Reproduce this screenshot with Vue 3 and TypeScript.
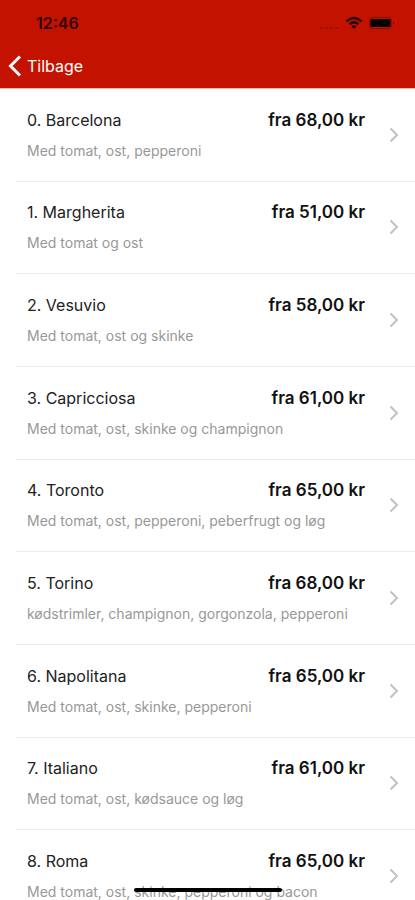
<script setup lang="ts">
interface Pizza {
  id: number
  name: string
  toppings: string
  price: string
}

const pizzas: Pizza[] = [
  { id: 0, name: 'Barcelona', toppings: 'Med tomat, ost, pepperoni', price: '68,00' },
  { id: 1, name: 'Margherita', toppings: 'Med tomat og ost', price: '51,00' },
  { id: 2, name: 'Vesuvio', toppings: 'Med tomat, ost og skinke', price: '58,00' },
  { id: 3, name: 'Capricciosa', toppings: 'Med tomat, ost, skinke og champignon', price: '61,00' },
  { id: 4, name: 'Toronto', toppings: 'Med tomat, ost, pepperoni, peberfrugt og løg', price: '65,00' },
  { id: 5, name: 'Torino', toppings: 'kødstrimler, champignon, gorgonzola, pepperoni', price: '68,00' },
  { id: 6, name: 'Napolitana', toppings: 'Med tomat, ost, skinke, pepperoni', price: '65,00' },
  { id: 7, name: 'Italiano', toppings: 'Med tomat, ost, kødsauce og løg', price: '61,00' },
  { id: 8, name: 'Roma', toppings: 'Med tomat, ost, skinke, pepperoni og bacon', price: '65,00' },
]
</script>

<template>
  <div class="screen">
    <header class="top">
      <div class="status">
        <span class="time">12:46</span>
        <span class="signals">
          <svg class="cell" width="20" height="4" viewBox="0 0 20 4" aria-hidden="true">
            <path d="M1 1h3v2H1zM6 1h3v2H6zM11 1h3v2h-3zM16 1h3v2h-3z" />
          </svg>
          <svg class="wifi" width="18" height="14" viewBox="0 0 18 14" aria-hidden="true">
            <path d="M1.500 5.300Q9-1.300 16.500 5.300M4.500 8.200Q9 4.400 13.500 8.200" />
            <path class="dot" d="M6.300 10.300Q9 8.200 11.700 10.300L9 13z" />
          </svg>
          <svg class="battery" width="26" height="12" viewBox="0 0 26 12" aria-hidden="true">
            <rect class="shell" x="0.5" y="0.5" width="22" height="11" rx="2.5" />
            <rect x="1.500" y="2" width="20" height="8" rx="1" />
            <path class="cap" d="M24 4q2 2 0 4z" />
          </svg>
        </span>
      </div>
      <nav class="nav">
        <button class="back" type="button">
          <svg width="14" height="22" viewBox="0 0 14 22" aria-hidden="true">
            <path d="M12 1.500L2.500 11l9.500 9.500" />
          </svg>
          <span>Tilbage</span>
        </button>
      </nav>
    </header>

    <ul class="list">
      <li v-for="pizza in pizzas" :key="pizza.id" class="item">
        <a class="row" href="#">
          <span class="details">
            <span class="headline">
              <span class="name">{{ pizza.id }}. {{ pizza.name }}</span>
              <span class="price">fra {{ pizza.price }} kr</span>
            </span>
            <span class="toppings">{{ pizza.toppings }}</span>
          </span>
          <svg class="chevron" width="10" height="16" viewBox="0 0 10 16" aria-hidden="true">
            <path d="M1.500 1.500L8 8l-6.500 6.500" />
          </svg>
        </a>
      </li>
    </ul>

    <div class="home-indicator"></div>
  </div>
</template>

<style>
body {
  margin: 0;
  background: #fff;
}
</style>

<style scoped>
.screen {
  position: relative;
  display: flex;
  flex-direction: column;
  height: 100vh;
  overflow: hidden;
  background: #fff;
  color: #222;
  font-family: Inter, "Liberation Sans", sans-serif;
}

.top {
  flex: none;
  background: #c41200;
  border-bottom: 1px solid #f3b5b0;
}

.status {
  display: flex;
  align-items: center;
  justify-content: space-between;
  height: 44px;
  padding: 2px 20px 0 36px;
  box-sizing: border-box;
}

.time {
  color: #300400;
  font-size: 16px;
  font-weight: 600;
}

.signals {
  display: flex;
  align-items: center;
  gap: 6px;
}

.cell {
  align-self: flex-end;
  fill: #a30f00;
}

.wifi {
  fill: none;
  stroke: #240300;
  stroke-width: 2.4;
}

.wifi .dot {
  fill: #240300;
  stroke: none;
}

.battery {
  fill: #000;
}

.battery .shell {
  fill: none;
  stroke: #8f0d00;
}

.battery .cap {
  fill: #7a0b00;
}

.nav {
  display: flex;
  align-items: center;
  height: 44px;
  padding: 0 8px;
}

.back {
  display: flex;
  align-items: center;
  gap: 5px;
  padding: 0;
  border: 0;
  background: none;
  color: #fff;
  font-family: inherit;
  font-size: 16px;
  line-height: 24px;
  cursor: pointer;
}

.back svg {
  fill: none;
  stroke: #fff;
  stroke-width: 3;
}

.list {
  display: grid;
  flex: none;
  grid-auto-rows: 1fr;
  min-height: 834px;
  margin: 0;
  padding: 0;
  list-style: none;
}

.item {
  margin-left: 16px;
  border-bottom: 1px solid #ececec;
}

.row {
  display: flex;
  align-items: center;
  gap: 24px;
  height: 100%;
  padding: 0 16px 0 11px;
  box-sizing: border-box;
  color: inherit;
  text-decoration: none;
}

.details {
  display: flex;
  flex: 1;
  flex-direction: column;
  gap: 9px;
  min-width: 0;
  padding-bottom: 1px;
}

.headline {
  display: flex;
  align-items: center;
  justify-content: space-between;
  font-size: 16px;
  line-height: 24px;
}

.price {
  color: #111;
  font-size: 17px;
  font-weight: 600;
}

.toppings {
  color: #989898;
  font-size: 14px;
  line-height: 20px;
  white-space: nowrap;
}

.chevron {
  flex: none;
  fill: none;
  stroke: #c2c2c2;
  stroke-width: 2;
}

.home-indicator {
  position: absolute;
  bottom: 8px;
  left: 50%;
  width: 148px;
  height: 4px;
  border-radius: 2px;
  background: #000;
  transform: translateX(-50%);
}
</style>
